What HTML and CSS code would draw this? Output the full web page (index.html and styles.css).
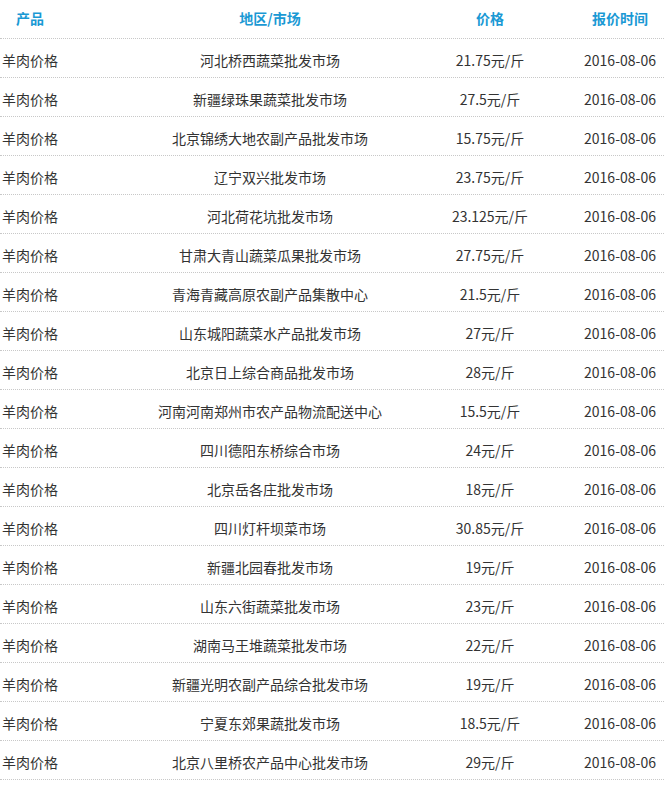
FILE: index.html
```html
<!DOCTYPE html>
<html lang="zh">
<head>
<meta charset="utf-8">
<link rel="stylesheet" href="styles.css">
</head>
<body>
<div class="table">
  <div class="row head">
    <div class="c1">产品</div><div class="c2">地区/市场</div><div class="c3">价格</div><div class="c4">报价时间</div>
  </div>
  <div class="row"><div class="c1 b">羊肉价格</div><div class="c2">河北桥西蔬菜批发市场</div><div class="c3">21.75元/斤</div><div class="c4">2016-08-06</div></div>
  <div class="row"><div class="c1 b">羊肉价格</div><div class="c2">新疆绿珠果蔬菜批发市场</div><div class="c3">27.5元/斤</div><div class="c4">2016-08-06</div></div>
  <div class="row"><div class="c1 b">羊肉价格</div><div class="c2">北京锦绣大地农副产品批发市场</div><div class="c3">15.75元/斤</div><div class="c4">2016-08-06</div></div>
  <div class="row"><div class="c1 b">羊肉价格</div><div class="c2">辽宁双兴批发市场</div><div class="c3">23.75元/斤</div><div class="c4">2016-08-06</div></div>
  <div class="row"><div class="c1 b">羊肉价格</div><div class="c2">河北荷花坑批发市场</div><div class="c3">23.125元/斤</div><div class="c4">2016-08-06</div></div>
  <div class="row"><div class="c1 b">羊肉价格</div><div class="c2">甘肃大青山蔬菜瓜果批发市场</div><div class="c3">27.75元/斤</div><div class="c4">2016-08-06</div></div>
  <div class="row"><div class="c1 b">羊肉价格</div><div class="c2">青海青藏高原农副产品集散中心</div><div class="c3">21.5元/斤</div><div class="c4">2016-08-06</div></div>
  <div class="row"><div class="c1 b">羊肉价格</div><div class="c2">山东城阳蔬菜水产品批发市场</div><div class="c3">27元/斤</div><div class="c4">2016-08-06</div></div>
  <div class="row"><div class="c1 b">羊肉价格</div><div class="c2">北京日上综合商品批发市场</div><div class="c3">28元/斤</div><div class="c4">2016-08-06</div></div>
  <div class="row"><div class="c1 b">羊肉价格</div><div class="c2">河南河南郑州市农产品物流配送中心</div><div class="c3">15.5元/斤</div><div class="c4">2016-08-06</div></div>
  <div class="row"><div class="c1 b">羊肉价格</div><div class="c2">四川德阳东桥综合市场</div><div class="c3">24元/斤</div><div class="c4">2016-08-06</div></div>
  <div class="row"><div class="c1 b">羊肉价格</div><div class="c2">北京岳各庄批发市场</div><div class="c3">18元/斤</div><div class="c4">2016-08-06</div></div>
  <div class="row"><div class="c1 b">羊肉价格</div><div class="c2">四川灯杆坝菜市场</div><div class="c3">30.85元/斤</div><div class="c4">2016-08-06</div></div>
  <div class="row"><div class="c1 b">羊肉价格</div><div class="c2">新疆北园春批发市场</div><div class="c3">19元/斤</div><div class="c4">2016-08-06</div></div>
  <div class="row"><div class="c1 b">羊肉价格</div><div class="c2">山东六街蔬菜批发市场</div><div class="c3">23元/斤</div><div class="c4">2016-08-06</div></div>
  <div class="row"><div class="c1 b">羊肉价格</div><div class="c2">湖南马王堆蔬菜批发市场</div><div class="c3">22元/斤</div><div class="c4">2016-08-06</div></div>
  <div class="row"><div class="c1 b">羊肉价格</div><div class="c2">新疆光明农副产品综合批发市场</div><div class="c3">19元/斤</div><div class="c4">2016-08-06</div></div>
  <div class="row"><div class="c1 b">羊肉价格</div><div class="c2">宁夏东郊果蔬批发市场</div><div class="c3">18.5元/斤</div><div class="c4">2016-08-06</div></div>
  <div class="row"><div class="c1 b">羊肉价格</div><div class="c2">北京八里桥农产品中心批发市场</div><div class="c3">29元/斤</div><div class="c4">2016-08-06</div></div>
</div>
</body>
</html>
```
FILE: styles.css
```css
html, body {
  margin: 0;
  padding: 0;
  background: #fff;
}
body {
  font-family: "Noto Sans CJK SC", "Noto Sans", sans-serif;
  font-size: 14px;
  color: #333;
}
.table {
  width: 664px;
}
.row {
  display: grid;
  grid-template-columns: 60px 340px 180px 84px;
  align-items: center;
  border-bottom: 1px dotted #c8c8c8;
  padding-top: 4px;
  height: 34px;
}
.row > div {
  text-align: center;
  white-space: nowrap;
  line-height: 20px;
}
.row .c2 {
  padding-left: 80px;
}
.row .c4 {
  padding-right: 4px;
}
.head {
  padding-top: 0;
  padding-bottom: 2px;
  height: 36px;
}
.head > div {
  color: #1a99d4;
  font-weight: bold;
}
```
